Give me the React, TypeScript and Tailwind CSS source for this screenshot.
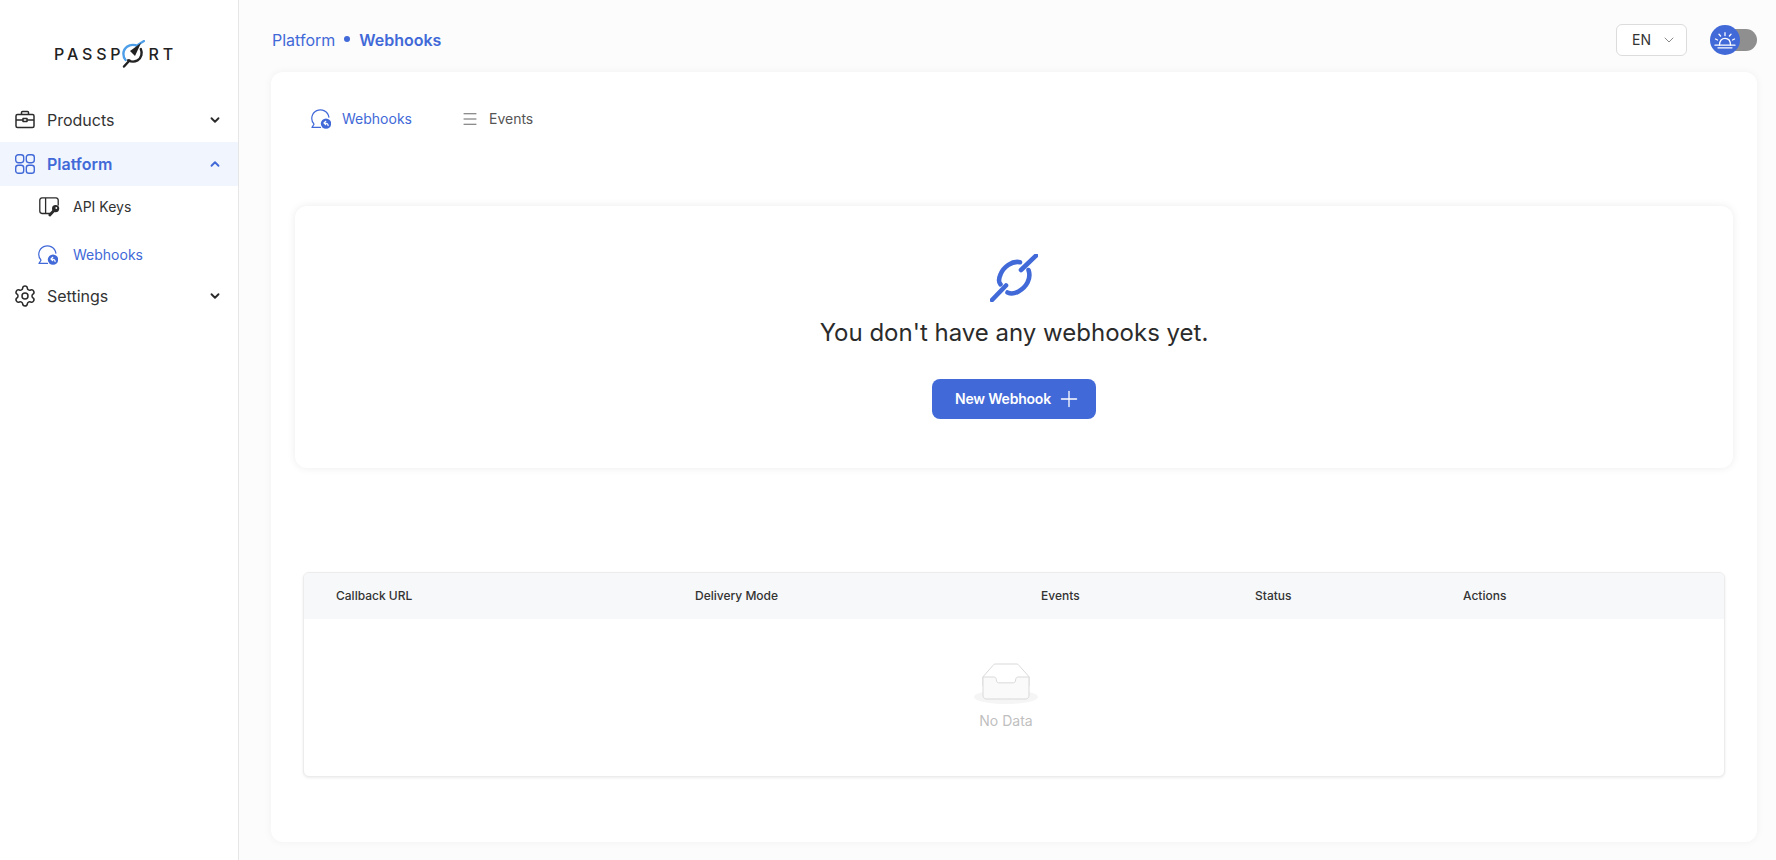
import { ChevronDown, ChevronUp, Menu, Plus, Settings } from "lucide-react";

const WebhookIcon = () => (
  <svg width="20" height="20" viewBox="0 0 20 20" fill="none">
    <path d="M17.9 8.2 A8.6 8.6 0 1 0 3 15.2 L1 18.4 H9.5" stroke="#4169d8" strokeWidth="1.2" strokeLinecap="round" strokeLinejoin="round" />
    <circle cx="15" cy="14.6" r="5.2" fill="#4169d8" />
    <path d="M17.1 16.6 C17.1 14.7 15.8 14 13.4 14 M14.8 12.3 L13 14 L14.8 15.7" stroke="#fff" strokeWidth="1.2" strokeLinecap="round" strokeLinejoin="round" />
  </svg>
);

const KeyIcon = () => (
  <svg width="22" height="20" viewBox="0 0 22 20" fill="none">
    <path d="M12 16.5 H3 A2.5 2.5 0 0 1 0.8 14 V3.2 A2.5 2.5 0 0 1 3 0.8 H17 A2.5 2.5 0 0 1 19.2 3.2 V8 M6.6 1 V16.3" stroke="#2b2b2b" strokeWidth="1.3" strokeLinecap="round" />
    <circle cx="16.6" cy="11.6" r="3.6" fill="#2b2b2b" />
    <path d="M15 13.5 L10.8 18" stroke="#2b2b2b" strokeWidth="2.8" strokeLinecap="round" />
    <circle cx="17.3" cy="11" r="0.9" fill="#fff" />
  </svg>
);

const Logo = () => (
  <div className="flex items-center h-[30px] text-[16px] font-medium text-[#222] tracking-[0.24em] font-['Inter',sans-serif]">
    <span>PASSP</span>
    <svg width="24" height="28" viewBox="0 0 24 28" fill="none" className="-ml-[3px] mr-[3px]">
      <path d="M14.5 5.2 C8 3.6 2.4 8 2.4 14 C2.4 16.6 3.3 18.6 4.6 20" stroke="#4d9ee8" strokeWidth="2.4" strokeLinecap="round" />
      <path d="M15.5 5.6 L23 1" stroke="#4d9ee8" strokeWidth="2.2" strokeLinecap="round" />
      <path d="M19.8 9 C21.6 13 20.6 18 16.5 20.4 C13.5 22 10 21.8 7.2 20.2" stroke="#222" strokeWidth="2.4" strokeLinecap="round" />
      <path d="M8.5 20.5 L3 26.5" stroke="#222" strokeWidth="2.4" strokeLinecap="round" />
      <path d="M20 3 L9 11 L14 16 Z" fill="#222" />
    </svg>
    <span>RT</span>
  </div>
);

const Sun = () => (
  <svg width="24" height="24" viewBox="0 0 24 24" fill="none" stroke="#fff" strokeWidth="1.3" strokeLinecap="round">
    <path d="M6.5 17 C6.5 12.6 9 10.3 12 10.3 C15 10.3 17.5 12.6 17.5 17" />
    <path d="M2 17.2 H22 M5 19.8 H19 M12 4.7 V7.6 M6 6.3 L7.6 8 M18 6.3 L16.4 8 M2.5 11 L4.5 12 M21.5 11 L19.5 12" />
  </svg>
);

function NavRow({ icon, label, active, open }: { icon: React.ReactNode; label: string; active?: boolean; open?: boolean }) {
  return (
    <div className={`flex items-center h-11 pl-[15px] pr-4 ${active ? "bg-[#f0f5fe] text-[#4169d8] font-semibold" : "text-[#333]"}`}>
      <span className="w-[32px] flex items-center">{icon}</span>
      <span className="text-base flex-1">{label}</span>
      {open ? <ChevronUp size={14} strokeWidth={3.2} className="text-[#4169d8]" /> : <ChevronDown size={14} strokeWidth={3.2} className="text-[#2b2b2b]" />}
    </div>
  );
}

export default function App() {
  return (
    <div className="flex h-[860px] w-full overflow-hidden bg-[#fcfcfc] font-['Inter',sans-serif]">
      <aside className="w-[239px] shrink-0 bg-white border-r border-[#e6e6e6] flex flex-col">
        <div className="flex justify-center h-[98px] pt-[39px] pr-[7px] shrink-0">
          <Logo />
        </div>
        <NavRow
          label="Products"
          icon={
            <svg width="20" height="20" viewBox="0 0 20 20" fill="none" stroke="#2b2b2b" strokeWidth="1.5" strokeLinejoin="round">
              <rect x="1" y="4.5" width="18" height="13" rx="1.5" />
              <path d="M6.5 4.5 V2.5 A1 1 0 0 1 7.5 1.5 H12.5 A1 1 0 0 1 13.5 2.5 V4.5 M1 10 H8 M12 10 H19" />
              <rect x="8" y="8.5" width="4" height="3" />
            </svg>
          }
        />
        <NavRow
          label="Platform"
          active
          open
          icon={
            <svg width="20" height="20" viewBox="0 0 20 20" fill="none" stroke="#4169d8" strokeWidth="1.4">
              <rect x="0.7" y="0.7" width="8" height="8" rx="2.6" />
              <rect x="11.3" y="0.7" width="8" height="8" rx="2.6" />
              <rect x="0.7" y="11.3" width="8" height="8" rx="2.6" />
              <rect x="11.3" y="11.3" width="8" height="8" rx="2.6" />
            </svg>
          }
        />
        <div className="flex items-center h-[42px] pl-[39px] text-sm text-[#333]">
          <span className="w-[34px]"><KeyIcon /></span>
          <span>API Keys</span>
        </div>
        <div className="flex items-center h-[38px] mt-[8px] pl-[38px] text-sm text-[#4169d8]">
          <span className="w-[35px]"><WebhookIcon /></span>
          <span>Webhooks</span>
        </div>
        <NavRow label="Settings" icon={<Settings size={24} strokeWidth={1.5} className="text-[#2b2b2b] -ml-[2px]" />} />
      </aside>

      <main className="flex-1 flex flex-col pl-[32px] pr-[19px] min-w-0">
        <header className="flex items-center justify-between h-[72px] shrink-0 pt-[8px]">
          <div className="flex items-center text-base text-[#4169d8] pl-[1px]">
            <span>Platform</span>
            <span className="w-[6px] h-[6px] rounded-full bg-[#4169d8] mx-[9px] -mt-[2px]"></span>
            <span className="font-semibold">Webhooks</span>
          </div>
          <div className="flex items-center">
            <div className="w-[71px] h-8 border border-[#dcdcdc] rounded-md bg-white flex items-center pl-[15px] gap-[10px] text-sm text-[#333]">
              EN
              <ChevronDown size={16} strokeWidth={1.3} className="text-[#777]" />
            </div>
            <div className="relative ml-[23px] w-[47px] h-[22px]">
              <div className="absolute right-0 top-0 h-[22px] w-[32px] rounded-full bg-[#8f8f8f]"></div>
              <div className="absolute -left-[0px] -top-[4px] w-[30px] h-[30px] rounded-full bg-[#4169d8] flex items-center justify-center">
                <Sun />
              </div>
            </div>
          </div>
        </header>

        <section className="w-[1486px] h-[770px] bg-white rounded-xl shadow-[0_0_8px_rgba(0,0,0,0.05)] pt-[35px] px-[24px] shrink-0">
          <div className="flex items-center h-[24px] text-sm pl-[16px]">
            <div className="flex items-center text-[#4169d8]">
              <span className="w-[31px]"><WebhookIcon /></span>
              <span>Webhooks</span>
            </div>
            <div className="flex items-center text-[#555] ml-[49px]">
              <Menu size={18} strokeWidth={1.2} className="mr-[10px]" />
              <span>Events</span>
            </div>
          </div>

          <div className="mt-[75px] h-[262px] rounded-xl bg-white shadow-[0_0_8px_rgba(0,0,0,0.08)] flex flex-col items-center pt-[48px]">
            <svg width="48" height="48" viewBox="0 0 48 48" fill="none" stroke="#4169d8" strokeWidth="4.6" strokeLinecap="round">
              <path d="M2 46 L16 31.5 M31 16 L46 1.7" />
              <path d="M30 8.2 C22 6.5 13.5 13 10.5 20.5 C8.5 25 8.8 28.5 10.5 30.3" />
              <path d="M38.5 16 C41.5 24.5 36.5 33 28.5 37.5 C24.5 39.8 20.5 40 17.5 38.5" />
            </svg>
            <h2 className="mt-[15px] text-2xl leading-8 text-[#2b2b2b]">You don't have any webhooks yet.</h2>
            <button className="mt-[30px] w-[164px] h-10 rounded-lg bg-[#4169d8] text-white text-sm font-semibold tracking-[-0.2px] flex items-center justify-start pl-[23px] gap-[5px]">
              New Webhook
              <Plus size={26} strokeWidth={1.2} />
            </button>
          </div>

          <div className="mt-[104px] mx-[8px] h-[205px] rounded-md border border-[#ececec] shadow-[0_1px_3px_rgba(0,0,0,0.08)] overflow-hidden bg-white">
            <div className="grid grid-cols-[359px_346px_214px_208px_1fr] h-[46px] items-center bg-[#f7f8fa] text-xs font-medium text-[#333]">
              <span className="pl-8">Callback URL</span>
              <span className="pl-8">Delivery Mode</span>
              <span className="pl-8">Events</span>
              <span className="pl-8">Status</span>
              <span className="pl-8">Actions</span>
            </div>
            <div className="flex flex-col items-center pt-[44px] pr-[16px]">
              <svg width="64" height="41" viewBox="0 0 64 41">
                <g transform="translate(0 1)" fill="none" fillRule="evenodd">
                  <ellipse fill="#f5f5f5" cx="32" cy="33" rx="32" ry="7" />
                  <g fillRule="nonzero" stroke="#d9d9d9">
                    <path d="M55 12.76L44.854 1.258C44.367.474 43.656 0 42.907 0H21.093c-.749 0-1.46.474-1.947 1.257L9 12.761V22h46v-9.24z" />
                    <path d="M41.613 15.931c0-1.605.994-2.93 2.227-2.931H55v18.137C55 33.26 53.68 35 52.05 35h-40.1C10.32 35 9 33.259 9 31.137V13h11.16c1.233 0 2.227 1.323 2.227 2.928v.022c0 1.605 1.005 2.901 2.237 2.901h14.752c1.232 0 2.237-1.308 2.237-2.913v-.007z" fill="#fafafa" />
                  </g>
                </g>
              </svg>
              <span className="mt-[7px] text-sm text-[#bfbfbf]">No Data</span>
            </div>
          </div>
        </section>
      </main>
    </div>
  );
}
